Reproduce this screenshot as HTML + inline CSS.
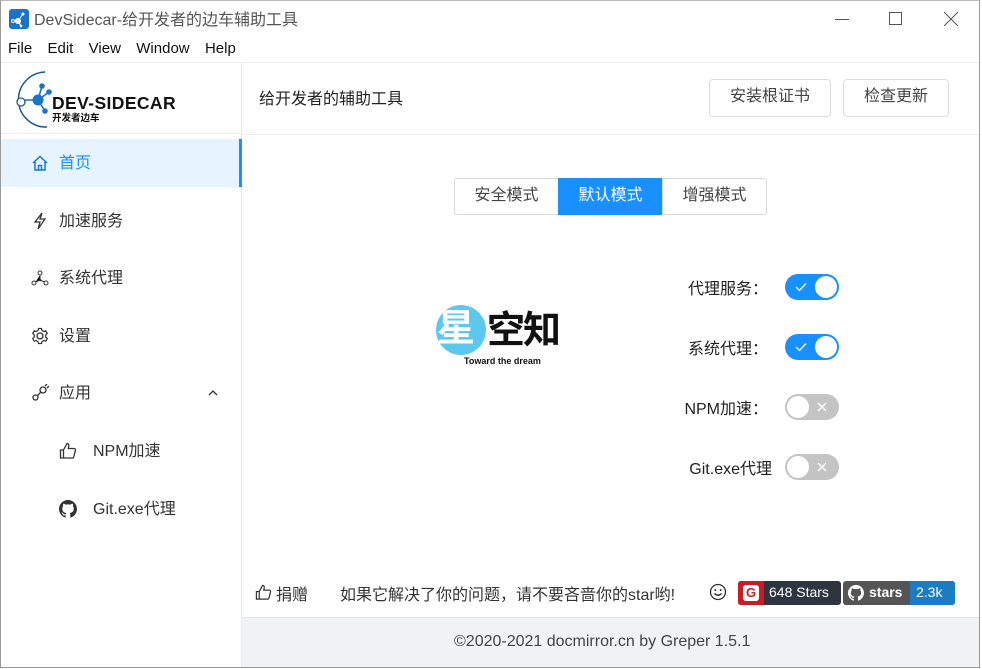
<!DOCTYPE html>
<html><head><meta charset="utf-8">
<style>
*{box-sizing:border-box;margin:0;padding:0}
body{width:982px;height:669px;overflow:hidden;background:#fff;font-family:"Liberation Sans","Noto Sans CJK SC",sans-serif;color:#333;position:relative}
.abs{position:absolute}
.win{position:absolute;left:0;top:0;width:980px;height:668px;border:1px solid #9a9a9a;border-top:1px solid #bbb;overflow:hidden;background:#fff}
.t{position:absolute;white-space:nowrap}
.side{left:0;top:62px;width:241px;height:605px;border-right:1px solid #e8e8e8}
.item{position:absolute;left:0;width:240px;height:48px;font-size:16px;color:#333}
.item .ic{position:absolute;left:30px;top:15px;width:18px;height:18px}
.item .lb{position:absolute;left:58px;top:10px}
.btn{position:absolute;height:38px;border:1px solid #dcdcdc;border-radius:4px;font-size:16px;color:#444;text-align:center;line-height:34px;background:#fff}
.seg{position:absolute;top:177px;height:37px;border:1px solid #d9d9d9;font-size:16px;line-height:33px;text-align:center;color:#444;background:#fff}
.sw{position:absolute;left:784px;width:54px;height:26px;border-radius:13px}
.sw.on{background:#1890ff}
.sw.off{background:#c4c4c4}
.sw .k{position:absolute;top:2px;width:22px;height:22px;border-radius:11px;background:#fff}
.sw.on .k{right:2px}.sw.off .k{left:2px}
.lab{position:absolute;right:211px;font-size:16px;color:#222;text-align:right}
</style></head><body>
<div class="win">
<svg class="abs" style="left:8px;top:8px" width="20" height="20" viewBox="0 0 20 20"><rect width="20" height="20" rx="3" fill="#1a73c9"/><circle cx="9" cy="12" r="3" fill="#fff"/><circle cx="4" cy="12" r="1.5" fill="none" stroke="#fff"/><circle cx="14" cy="5" r="1.5" fill="#fff"/><circle cx="12" cy="17" r="1.3" fill="#fff"/><path d="M9 12L14 5M9 12L12 17M9 12H5.5" stroke="#fff"/></svg>
<div class="t" style="left:33px;top:5px;font-size:16px;color:#555">DevSidecar-给开发者的边车辅助工具</div>
<div class="abs" style="left:834px;top:18px;width:14px;height:1px;background:#555"></div>
<div class="abs" style="left:888px;top:11px;width:13px;height:13px;border:1px solid #555"></div>
<svg class="abs" style="left:943px;top:11px" width="14" height="14"><path d="M0 0L14 14M14 0L0 14" stroke="#555" stroke-width="1"/></svg>
<div class="t" style="left:7px;top:39px;font-size:15px;color:#111;word-spacing:3.5px">File&nbsp; Edit&nbsp; View&nbsp; Window&nbsp; Help</div>
<div class="abs" style="left:0;top:61px;width:980px;height:1px;background:#eee"></div>

<div class="abs side">
 <svg class="abs" style="left:8px;top:6px" width="180" height="62" viewBox="0 0 180 62">
  <path d="M36 3A27 27 0 1 0 38 58" fill="none" stroke="#1a5a8a" stroke-width="1.5"/>
  <circle cx="29" cy="31" r="5.5" fill="#1a73c9"/><circle cx="12" cy="33" r="4" fill="#fff" stroke="#1a5a8a" stroke-width="1.3"/>
  <circle cx="33" cy="17" r="2.8" fill="#1a73c9"/><circle cx="40" cy="23" r="2.8" fill="#1a73c9"/><circle cx="36" cy="42" r="2.8" fill="#1a73c9"/>
  <path d="M29 31L33 17M29 31L40 23M29 31L36 42M29 31H16" stroke="#1a73c9" stroke-width="1.6"/>
  <text x="43" y="40" font-family="Liberation Sans,sans-serif" font-weight="bold" font-size="17.5" fill="#111" letter-spacing="0.4">DEV-SIDECAR</text>
  <text x="43" y="52" font-family="Noto Sans CJK SC,sans-serif" font-weight="bold" font-size="9.5" fill="#111">开发者边车</text>
 </svg>
 <div class="abs" style="left:0;top:70px;width:240px;height:1px;background:#eee"></div>
 <div class="item" style="top:76px;background:#e6f4ff;color:#1890ff">
  <svg class="ic" viewBox="0 0 18 18"><path d="M2 9L9 2.5L16 9M4 7.5V16H14V7.5M7.5 16V11.5H10.5V16" fill="none" stroke="#1a78c8" stroke-width="1.5"/></svg>
  <span class="lb">首页</span>
  <div class="abs" style="right:-1px;top:0;width:3px;height:48px;background:#1890ff"></div>
 </div>
 <div class="item" style="top:134px"><svg class="ic" viewBox="0 0 18 18"><path d="M11 1L4 10H9L7 17L14 7H9Z" fill="none" stroke="#333" stroke-width="1.3"/></svg><span class="lb">加速服务</span></div>
 <div class="item" style="top:191px"><svg class="ic" viewBox="0 0 18 18"><circle cx="9" cy="4" r="2" fill="none" stroke="#333"/><circle cx="3" cy="14" r="2" fill="none" stroke="#333"/><circle cx="15" cy="14" r="2" fill="none" stroke="#333"/><circle cx="9" cy="11" r="1.3" fill="#333"/><path d="M9 6V11L4.5 13M9 11L13.5 13" stroke="#333"/></svg><span class="lb">系统代理</span></div>
 <div class="item" style="top:249px"><svg class="ic" viewBox="0 0 18 18"><circle cx="9" cy="9" r="3" fill="none" stroke="#333" stroke-width="1.3"/><path d="M7.5 1.5h3l.5 2 1.8 1 2-.7 1.5 2.6-1.5 1.4v2.4l1.5 1.4-1.5 2.6-2-.7-1.8 1-.5 2h-3l-.5-2-1.8-1-2 .7-1.5-2.6 1.5-1.4V7.8L1.7 6.4l1.5-2.6 2 .7 1.8-1z" fill="none" stroke="#333" stroke-width="1.2"/></svg><span class="lb">设置</span></div>
 <div class="item" style="top:306px"><svg class="ic" viewBox="0 0 18 18"><circle cx="4.5" cy="13.5" r="2.5" fill="none" stroke="#333" stroke-width="1.3"/><circle cx="12" cy="6" r="3" fill="none" stroke="#333" stroke-width="1.3"/><path d="M6.5 11.5L9.5 8.5M14 2L16 0M16 4L18 2" stroke="#333" stroke-width="1.3"/></svg><span class="lb">应用</span>
  <svg class="abs" style="left:207px;top:20px" width="10" height="7"><path d="M1 6L5 2L9 6" fill="none" stroke="#333" stroke-width="1.3"/></svg></div>
 <div class="item" style="top:364px"><svg class="ic" style="left:58px" viewBox="0 0 18 18"><path d="M1.5 8H4.5V16H1.5ZM4.5 8L8 1.5C9.5 1.5 10 2.5 9.8 4L9.3 6.5H15C16 6.5 16.7 7.4 16.4 8.4L14.8 14.8C14.6 15.5 14 16 13.3 16H4.5" fill="none" stroke="#333" stroke-width="1.3"/></svg><span class="lb" style="left:92px">NPM加速</span></div>
 <div class="item" style="top:422px"><svg class="ic" style="left:58px" viewBox="0 0 16 16"><path fill="#333" d="M8 0C3.58 0 0 3.58 0 8c0 3.54 2.29 6.53 5.47 7.59.4.07.55-.17.55-.38 0-.19-.01-.82-.01-1.49-2.01.37-2.53-.49-2.69-.94-.09-.23-.48-.94-.82-1.13-.28-.15-.68-.52-.01-.53.63-.01 1.08.58 1.23.82.72 1.21 1.87.87 2.33.66.07-.52.28-.87.51-1.07-1.78-.2-3.64-.89-3.64-3.95 0-.87.31-1.59.82-2.15-.08-.2-.36-1.02.08-2.12 0 0 .67-.21 2.2.82.64-.18 1.32-.27 2-.27.68 0 1.36.09 2 .27 1.53-1.04 2.2-.82 2.2-.82.44 1.1.16 1.92.08 2.12.51.56.82 1.27.82 2.15 0 3.07-1.87 3.75-3.65 3.95.29.25.54.73.54 1.48 0 1.07-.01 1.93-.01 2.2 0 .21.15.46.55.38A8.013 8.013 0 0016 8c0-4.42-3.58-8-8-8z"/></svg><span class="lb" style="left:92px">Git.exe代理</span></div>
</div>

<div class="t" style="left:258px;top:84px;font-size:16px;color:#222">给开发者的辅助工具</div>
<div class="btn" style="left:708px;top:78px;width:122px">安装根证书</div>
<div class="btn" style="left:842px;top:78px;width:106px">检查更新</div>
<div class="abs" style="left:241px;top:133px;width:739px;height:1px;background:#eee"></div>

<div class="seg" style="left:453px;width:105px;border-radius:3px 0 0 3px">安全模式</div>
<div class="seg" style="left:557px;width:105px;background:#1890ff;border-color:#1890ff;color:#fff">默认模式</div>
<div class="seg" style="left:661px;width:105px;border-radius:0 3px 3px 0">增强模式</div>

<div class="abs" style="left:435px;top:304px;width:50px;height:50px;border-radius:25px;background:#5cc8f0"></div>
<div class="t" style="left:436px;top:303px;font-size:38px;font-weight:bold;color:#fff;line-height:50px">星</div>
<div class="t" style="left:486px;top:305px;font-size:38px;font-weight:bold;color:#111;line-height:50px;letter-spacing:-2px">空知</div>
<div class="t" style="left:463px;top:355px;font-size:9px;font-weight:bold;color:#111">Toward the dream</div>

<div class="lab" style="top:274px">代理服务：</div>
<div class="sw on" style="top:273px"><svg class="abs" style="left:10px;top:8px" width="12" height="10"><path d="M1 5L4.5 8.5L11 1.5" fill="none" stroke="#fff" stroke-width="1.3"/></svg><div class="k"></div></div>
<div class="lab" style="top:334px">系统代理：</div>
<div class="sw on" style="top:333px"><svg class="abs" style="left:10px;top:8px" width="12" height="10"><path d="M1 5L4.5 8.5L11 1.5" fill="none" stroke="#fff" stroke-width="1.3"/></svg><div class="k"></div></div>
<div class="lab" style="top:394px">NPM加速：</div>
<div class="sw off" style="top:393px"><svg class="abs" style="left:32px;top:8px" width="10" height="10"><path d="M1 1L9 9M9 1L1 9" stroke="#fff" stroke-width="1.3"/></svg><div class="k"></div></div>
<div class="lab" style="top:454px;right:207px">Git.exe代理</div>
<div class="sw off" style="top:453px"><svg class="abs" style="left:32px;top:8px" width="10" height="10"><path d="M1 1L9 9M9 1L1 9" stroke="#fff" stroke-width="1.3"/></svg><div class="k"></div></div>

<svg class="abs" style="left:254px;top:583px" width="17" height="17" viewBox="0 0 18 18"><path d="M1.5 8H4.5V16H1.5ZM4.5 8L8 1.5C9.5 1.5 10 2.5 9.8 4L9.3 6.5H15C16 6.5 16.7 7.4 16.4 8.4L14.8 14.8C14.6 15.5 14 16 13.3 16H4.5" fill="none" stroke="#333" stroke-width="1.3"/></svg>
<div class="t" style="left:275px;top:580px;font-size:16px;color:#333">捐赠</div>
<div class="t" style="left:339px;top:580px;font-size:16px;color:#333">如果它解决了你的问题，请不要吝啬你的star哟!</div>
<svg class="abs" style="left:708px;top:582px" width="18" height="18"><circle cx="9" cy="9" r="7.5" fill="none" stroke="#333" stroke-width="1.3"/><circle cx="6.3" cy="7" r="1" fill="#333"/><circle cx="11.7" cy="7" r="1" fill="#333"/><path d="M5.5 10.5Q9 14 12.5 10.5" fill="none" stroke="#333" stroke-width="1.3"/></svg>
<div class="abs" style="left:737px;top:580px;width:103px;height:24px;border-radius:3px;background:#2f3540;overflow:hidden">
 <div class="abs" style="left:0;top:0;width:26px;height:24px;background:#c71d23"></div>
 <div class="abs" style="left:5px;top:4px;width:16px;height:16px;border-radius:3px;background:#fff;color:#c71d23;font-size:13px;font-weight:bold;text-align:center;line-height:16px">G</div>
 <div class="t" style="left:31px;top:3px;font-size:14px;color:#fff">648 Stars</div>
</div>
<div class="abs" style="left:842px;top:580px;width:112px;height:24px;border-radius:3px;background:#555;overflow:hidden">
 <svg class="abs" style="left:5px;top:4px" width="16" height="16" viewBox="0 0 16 16"><path fill="#fff" d="M8 0C3.58 0 0 3.58 0 8c0 3.54 2.29 6.53 5.47 7.59.4.07.55-.17.55-.38 0-.19-.01-.82-.01-1.49-2.01.37-2.53-.49-2.69-.94-.09-.23-.48-.94-.82-1.13-.28-.15-.68-.52-.01-.53.63-.01 1.08.58 1.23.82.72 1.21 1.87.87 2.33.66.07-.52.28-.87.51-1.07-1.78-.2-3.64-.89-3.64-3.95 0-.87.31-1.59.82-2.15-.08-.2-.36-1.02.08-2.12 0 0 .67-.21 2.2.82.64-.18 1.32-.27 2-.27.68 0 1.36.09 2 .27 1.53-1.04 2.2-.82 2.2-.82.44 1.1.16 1.92.08 2.12.51.56.82 1.27.82 2.15 0 3.07-1.87 3.75-3.65 3.95.29.25.54.73.54 1.48 0 1.07-.01 1.93-.01 2.2 0 .21.15.46.55.38A8.013 8.013 0 0016 8c0-4.42-3.58-8-8-8z"/></svg>
 <div class="t" style="left:26px;top:3px;font-size:14px;color:#fff;font-weight:bold">stars</div>
 <div class="abs" style="left:67px;top:0;width:45px;height:24px;background:#1a7dc4"></div>
 <div class="t" style="left:73px;top:3px;font-size:14px;color:#fff">2.3k</div>
</div>

<div class="abs" style="left:241px;top:616px;width:739px;height:52px;background:#f0f2f5;border-top:1px solid #e4e4e4"></div>
<div class="t" style="left:453px;top:632px;font-size:16px;color:#444">©2020-2021 docmirror.cn by Greper 1.5.1</div>
</div>
</body></html>
